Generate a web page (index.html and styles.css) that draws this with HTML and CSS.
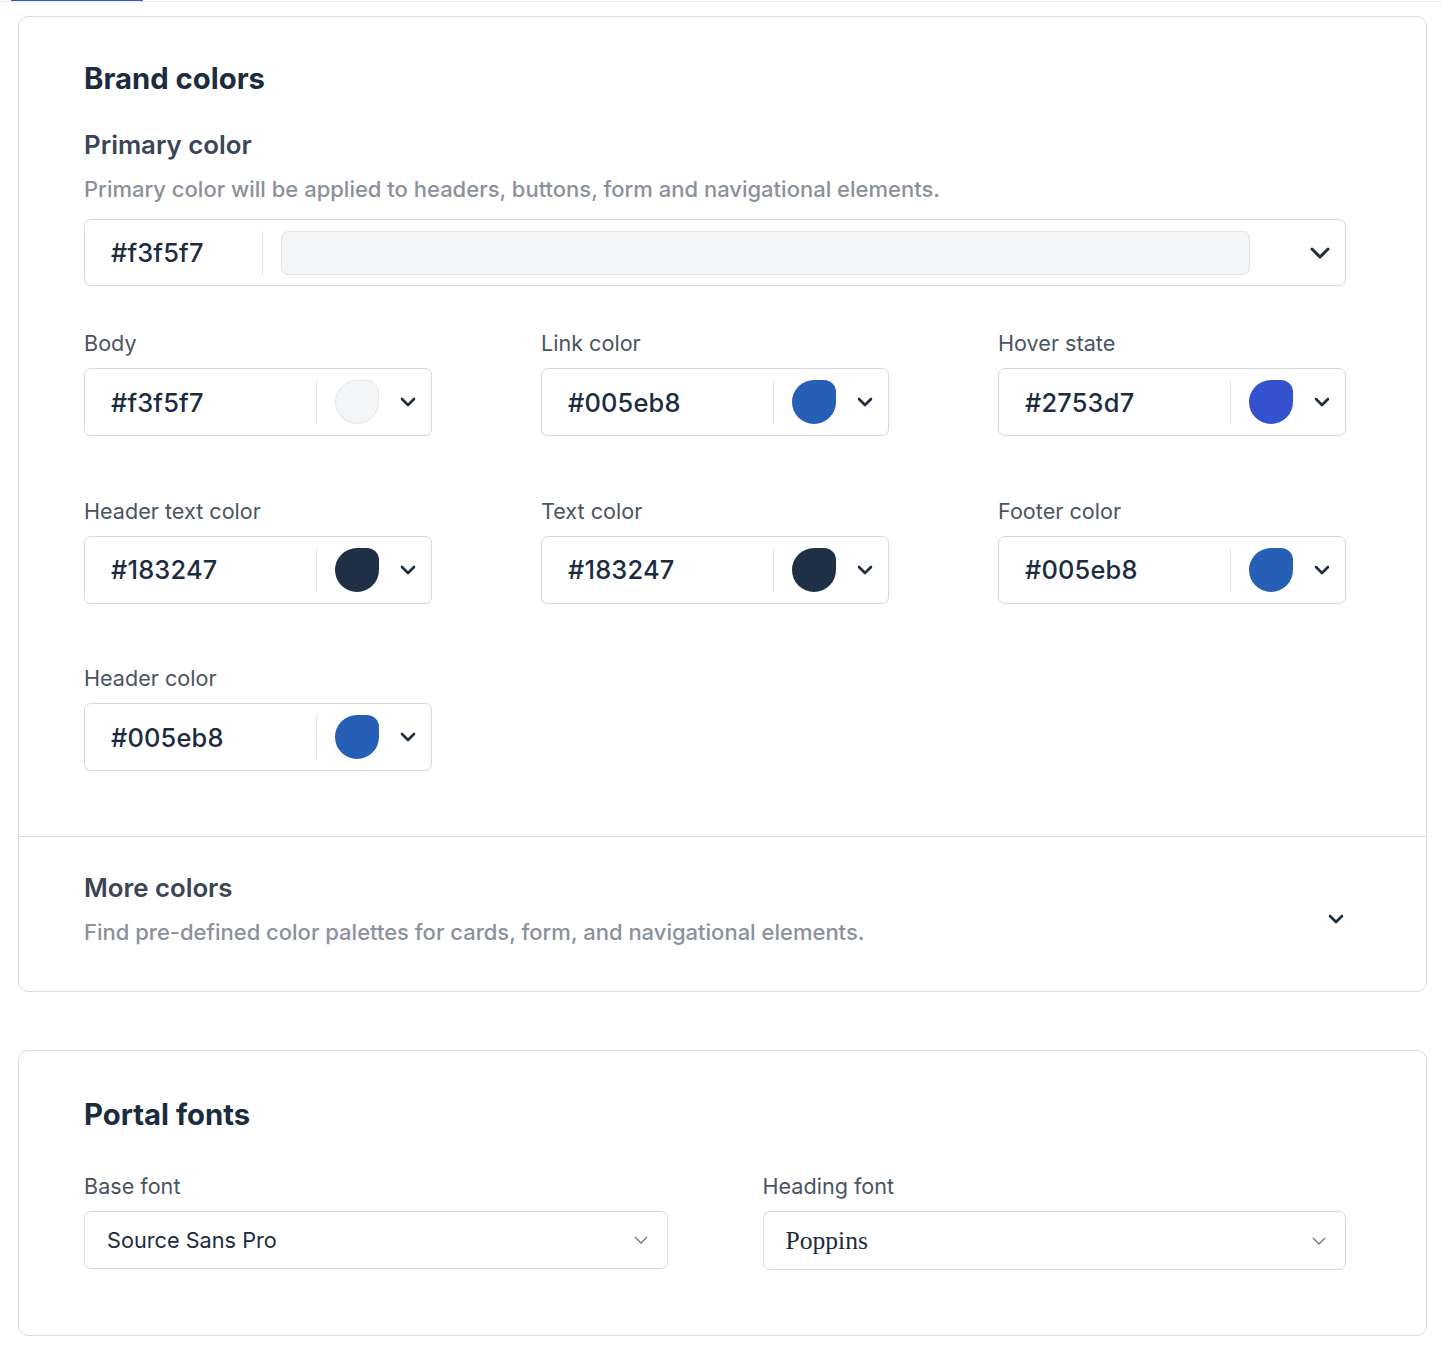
FILE: index.html
```html
<!DOCTYPE html>
<html>
<head>
<meta charset="utf-8">
<link rel="stylesheet" href="styles.css">
</head>
<body>
<div class="topbar"><div class="tab-active"></div></div>
<main class="page">
  <section class="card">
    <div class="card-body">
      <h2 class="card-title">Brand colors</h2>
      <h3 class="sub-title">Primary color</h3>
      <p class="desc">Primary color will be applied to headers, buttons, form and navigational elements.</p>
      <div class="cinput primary">
        <span class="hex hex-primary">#f3f5f7</span>
        <span class="vdiv"></span>
        <span class="bar"></span>
        <svg class="chev big" viewBox="0 0 20 12" width="20" height="12"><path d="M2 2l8 8 8-8" fill="none" stroke="#1f2d3d" stroke-width="3" stroke-linecap="round" stroke-linejoin="round"/></svg>
      </div>
      <div class="color-grid">
        <div class="field">
          <label class="label">Body</label>
          <div class="cinput">
            <span class="hex">#f3f5f7</span><span class="vdiv"></span>
            <span class="swatch light"></span>
            <svg class="chev" viewBox="0 0 16 10" width="16" height="10"><path d="M2 2l6 6 6-6" fill="none" stroke="#1f2d3d" stroke-width="2.6" stroke-linecap="round" stroke-linejoin="round"/></svg>
          </div>
        </div>
        <div class="field">
          <label class="label">Link color</label>
          <div class="cinput">
            <span class="hex">#005eb8</span><span class="vdiv"></span>
            <span class="swatch blue"></span>
            <svg class="chev" viewBox="0 0 16 10" width="16" height="10"><path d="M2 2l6 6 6-6" fill="none" stroke="#1f2d3d" stroke-width="2.6" stroke-linecap="round" stroke-linejoin="round"/></svg>
          </div>
        </div>
        <div class="field">
          <label class="label">Hover state</label>
          <div class="cinput">
            <span class="hex">#2753d7</span><span class="vdiv"></span>
            <span class="swatch hover"></span>
            <svg class="chev" viewBox="0 0 16 10" width="16" height="10"><path d="M2 2l6 6 6-6" fill="none" stroke="#1f2d3d" stroke-width="2.6" stroke-linecap="round" stroke-linejoin="round"/></svg>
          </div>
        </div>
        <div class="field">
          <label class="label">Header text color</label>
          <div class="cinput">
            <span class="hex">#183247</span><span class="vdiv"></span>
            <span class="swatch dark"></span>
            <svg class="chev" viewBox="0 0 16 10" width="16" height="10"><path d="M2 2l6 6 6-6" fill="none" stroke="#1f2d3d" stroke-width="2.6" stroke-linecap="round" stroke-linejoin="round"/></svg>
          </div>
        </div>
        <div class="field">
          <label class="label">Text color</label>
          <div class="cinput">
            <span class="hex">#183247</span><span class="vdiv"></span>
            <span class="swatch dark"></span>
            <svg class="chev" viewBox="0 0 16 10" width="16" height="10"><path d="M2 2l6 6 6-6" fill="none" stroke="#1f2d3d" stroke-width="2.6" stroke-linecap="round" stroke-linejoin="round"/></svg>
          </div>
        </div>
        <div class="field">
          <label class="label">Footer color</label>
          <div class="cinput">
            <span class="hex">#005eb8</span><span class="vdiv"></span>
            <span class="swatch blue"></span>
            <svg class="chev" viewBox="0 0 16 10" width="16" height="10"><path d="M2 2l6 6 6-6" fill="none" stroke="#1f2d3d" stroke-width="2.6" stroke-linecap="round" stroke-linejoin="round"/></svg>
          </div>
        </div>
        <div class="field">
          <label class="label">Header color</label>
          <div class="cinput">
            <span class="hex">#005eb8</span><span class="vdiv"></span>
            <span class="swatch blue"></span>
            <svg class="chev" viewBox="0 0 16 10" width="16" height="10"><path d="M2 2l6 6 6-6" fill="none" stroke="#1f2d3d" stroke-width="2.6" stroke-linecap="round" stroke-linejoin="round"/></svg>
          </div>
        </div>
      </div>
    </div>
    <div class="more">
      <div class="more-text">
        <h3 class="sub-title">More colors</h3>
        <p class="desc">Find pre-defined color palettes for cards, form, and navigational elements.</p>
      </div>
      <svg class="chev more-chev" viewBox="0 0 16 10" width="16" height="10"><path d="M2 2l6 6 6-6" fill="none" stroke="#1f2d3d" stroke-width="2.6" stroke-linecap="round" stroke-linejoin="round"/></svg>
    </div>
  </section>

  <section class="card fonts-card">
    <h2 class="card-title">Portal fonts</h2>
    <div class="font-grid">
      <div class="field">
        <label class="label">Base font</label>
        <div class="select">
          <span class="sel-text sans">Source Sans Pro</span>
          <svg class="thin-chev" viewBox="0 0 14 8" width="14" height="8"><path d="M1 1l6 6 6-6" fill="none" stroke="#6b7585" stroke-width="1.3"/></svg>
        </div>
      </div>
      <div class="field">
        <label class="label">Heading font</label>
        <div class="select tall">
          <span class="sel-text serif">Poppins</span>
          <svg class="thin-chev" viewBox="0 0 14 8" width="14" height="8"><path d="M1 1l6 6 6-6" fill="none" stroke="#6b7585" stroke-width="1.3"/></svg>
        </div>
      </div>
    </div>
  </section>
</main>
</body>
</html>
```

FILE: styles.css
```css
* { box-sizing: border-box; }
html, body { margin: 0; padding: 0; background: #fff; }
body {
  font-family: Inter, "Noto Sans", sans-serif;
  color: #1f2d3d;
}
.topbar {
  height: 2px;
  border-bottom: 1px solid #ebedf0;
  position: relative;
}
.tab-active {
  position: absolute;
  left: 11px;
  top: 0;
  width: 132px;
  height: 1px;
  background: #2c5cc5;
}
.page {
  padding: 14px 15px 40px 18px;
  display: flex;
  flex-direction: column;
  gap: 58px;
}
.card {
  border: 1px solid #d8dde4;
  border-radius: 10px;
  background: #fff;
}
.card-body {
  padding: 46px 80px 65px 65px;
}
.card-title {
  margin: 0;
  font-size: 29.3px;
  line-height: 32px;
  font-weight: 650;
  color: #1c2c3f;
}
.sub-title {
  margin: 35px 0 0;
  font-size: 25.8px;
  line-height: 30px;
  font-weight: 600;
  color: #3a4656;
}
.desc {
  margin: 15px 0 0;
  font-size: 22px;
  line-height: 28px;
  font-weight: 500;
  color: #8b919b;
}
.cinput {
  display: flex;
  align-items: center;
  height: 68px;
  border: 1px solid #d5dae1;
  border-radius: 7px;
  background: #fff;
  box-shadow: 0 1px 2px rgba(16, 24, 40, 0.03);
}
.cinput.primary {
  margin-top: 16px;
  height: 67px;
}
.hex {
  flex: 1;
  padding-left: 26px;
  font-size: 25.4px;
  font-weight: 500;
  color: #1c2c3f;
  letter-spacing: 0.2px;
}
.hex-primary {
  flex: 0 0 177px;
}
.vdiv {
  width: 1px;
  height: 44px;
  background: #e1e4e8;
}
.bar {
  flex: 1;
  height: 44px;
  margin-left: 18px;
  background: #f3f5f7;
  border: 1px solid #e1e4e8;
  border-radius: 7px;
}
.chev { flex: none; display: block; }
.chev.big { margin: 0 15px 0 60px; }
.cinput .chev:not(.big) { margin: 0 15px 0 21px; }
.swatch {
  width: 44px;
  height: 44px;
  margin-left: 18px;
  border-radius: 50% 12px 50% 50%;
}
.swatch.light { background: #f3f5f7; border: 1px solid #e3e6ea; }
.swatch.blue { background: #265fb5; }
.swatch.hover { background: #3452d0; }
.swatch.dark { background: #1f3046; }

.color-grid {
  margin-top: 43px;
  display: grid;
  grid-template-columns: repeat(3, 1fr);
  column-gap: 109px;
  row-gap: 60.5px;
}
.field {
  display: flex;
  flex-direction: column;
}
.label {
  font-size: 21.6px;
  line-height: 28px;
  font-weight: 400;
  color: #4a5462;
  margin-bottom: 11px;
}

.more {
  border-top: 1px solid #d8dde4;
  padding: 36px 82px 45px 65px;
  display: flex;
  align-items: center;
  justify-content: space-between;
}
.more .sub-title { margin-top: 0; }
.more-chev { margin-top: 18px; }

.fonts-card {
  padding: 48px 80px 65px 65px;
}
.font-grid {
  margin-top: 41px;
  display: grid;
  grid-template-columns: 1fr 1fr;
  column-gap: 95px;
}
.select {
  height: 58px;
  border: 1px solid #d5dae1;
  border-radius: 7px;
  display: flex;
  align-items: center;
  justify-content: space-between;
  padding: 0 19px 0 22px;
}
.select.tall { height: 59px; }
.sel-text { color: #1c2c3f; }
.sel-text.sans {
  font-family: Inter, "Noto Sans", sans-serif;
  font-size: 21.7px;
  font-weight: 400;
}
.sel-text.serif {
  font-family: "Liberation Serif", "DejaVu Serif", serif;
  font-size: 25.6px;
}
.thin-chev { display: block; }
```
